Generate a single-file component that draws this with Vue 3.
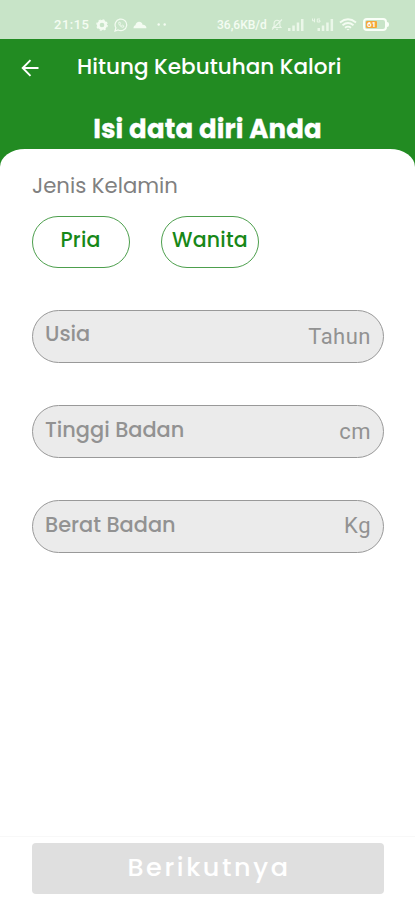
<script setup>
import { ref } from 'vue'

const genders = [
  { id: 'pria', label: 'Pria' },
  { id: 'wanita', label: 'Wanita' },
]
const fields = [
  { id: 'usia', label: 'Usia', unit: 'Tahun' },
  { id: 'tinggi', label: 'Tinggi Badan', unit: 'cm' },
  { id: 'berat', label: 'Berat Badan', unit: 'Kg' },
]
const selected = ref(null)
</script>

<template>
  <div class="screen">
    <div class="status">
      <span class="time">21:15</span>
      <svg class="gear" width="12" height="12" viewBox="0 0 12 12">
        <circle cx="6" cy="6" r="3.7" fill="none" stroke="currentColor" stroke-width="2.7" />
        <circle cx="6" cy="6" r="5.2" fill="none" stroke="currentColor" stroke-width="1.2" stroke-dasharray="2.1 1.98" />
      </svg>
      <svg class="chat" width="14" height="14" viewBox="0 0 14 14" fill="none" stroke="currentColor">
        <path d="M1 13l.9-3.2A5.8 5.8 0 1 1 4.2 12z" stroke-width="1.2" />
        <path d="M4.8 4.3c-.6 2.3 2.2 5.2 4.6 4.9l.5-1.2-1.5-.8-.8.7C6.7 7.5 6.3 7 6 6.3l.6-.7-.7-1.5z" stroke-width=".8" />
      </svg>
      <svg class="cloud" width="14" height="9" viewBox="0 0 13 8">
        <path d="M.5 7.500C.4 5.700 1.300 4.900 2.300 4.600 2.600 1.700 6 .2 8 2.400c.7.700.8 1.500.9 1.900 1.700-.3 3.600.8 3.600 3.200z" fill="currentColor" />
      </svg>
      <svg class="more" width="10" height="3" viewBox="0 0 10 3" fill="currentColor">
        <circle cx="1.700" cy="1.500" r="1.200" /><circle cx="7.700" cy="1.500" r="1.200" />
      </svg>
      <span class="speed">36,6KB/d</span>
      <svg class="mute" width="12" height="13" viewBox="0 0 12 13" fill="none" stroke="currentColor">
        <path d="M2 9.500h8L8.900 8V5.200a2.900 2.900 0 0 0-5.800 0V8zM5 11.300h2M1 11.500L11 1.500" stroke-width="1.100" />
      </svg>
      <svg class="signal" width="16" height="12" viewBox="0 0 16 12" fill="currentColor">
        <path d="M0 9h2.500v3H0zM4.300 6.500h2.500V12H4.300zM8.700 3.500h2.500V12H8.700zM13 0h2.500v12H13z" />
      </svg>
      <svg class="signal-data" width="22" height="13" viewBox="0 0 22 13" fill="currentColor">
        <path d="M5.500 10H8v3H5.500zM9.800 7.500h2.500V13H9.800zM14.200 4.500h2.500V13h-2.500zM18.600 1h2.500v12h-2.500z" />
        <path d="M.5.500v2.300h2V.5M2.500 2.300v2M8 1H5.300v3H8V2.600H6.700" fill="none" stroke="currentColor" stroke-width="1" />
      </svg>
      <svg class="wifi" width="18" height="13" viewBox="0 0 18 13" fill="none" stroke="currentColor" stroke-width="1.800">
        <path d="M1 4.500q8-6.500 16 0M3.500 7.200q5.500-4.500 11 0M6 9.800q3-2.400 6 0" />
        <path d="M7.500 11h3L9 12.500z" fill="currentColor" stroke="none" />
      </svg>
      <span class="battery"><span class="charge">61</span></span>
    </div>

    <header class="bar">
      <svg class="back" width="18" height="18" viewBox="0 0 18 18" fill="none" stroke="#fff" stroke-width="1.900">
        <path d="M17.500 9H1.800M9.500 1.200L1.700 9l7.800 7.800" />
      </svg>
      <h1 class="title">Hitung Kebutuhan Kalori</h1>
    </header>
    <h2 class="heading">Isi data diri Anda</h2>

    <main class="card">
      <p class="caption">Jenis Kelamin</p>
      <div class="genders">
        <button
          v-for="g in genders"
          :key="g.id"
          type="button"
          class="gender"
          :class="g.id"
          :aria-pressed="selected === g.id"
          @click="selected = g.id"
        >{{ g.label }}</button>
      </div>
      <div class="fields">
        <label v-for="f in fields" :key="f.id" class="field" :class="f.id">
          <span class="label">{{ f.label }}</span>
          <span class="unit">{{ f.unit }}</span>
        </label>
      </div>
    </main>

    <footer class="footer">
      <button type="button" class="next">Berikutnya</button>
    </footer>
  </div>
</template>

<style>
body {
  margin: 0;
}
</style>

<style scoped>
.screen {
  box-sizing: border-box;
  width: 415px;
  height: 900px;
  display: flex;
  flex-direction: column;
  overflow: hidden;
  background: #228b22;
  font-family: Poppins, Inter, sans-serif;
}
.status {
  flex: none;
  box-sizing: border-box;
  height: 39px;
  padding: 10px 20px 0 54px;
  display: flex;
  align-items: center;
  background: #c8e4c8;
  color: #f4fcf2;
}
.status svg {
  flex: none;
}
.time {
  width: 42px;
  font: 500 13px/16px Roboto, sans-serif;
  letter-spacing: 0.5px;
}
.chat {
  margin-left: 6px;
}
.cloud {
  margin-left: 5px;
}
.more {
  margin-left: 10px;
}
.speed {
  width: 52px;
  margin-left: 50px;
  font: 500 12px/16px Roboto, sans-serif;
  white-space: nowrap;
}
.mute {
  margin-left: 2px;
  opacity: 0.8;
}
.signal {
  margin-left: 5px;
  opacity: 0.8;
}
.signal-data {
  margin-left: 8px;
  opacity: 0.8;
}
.wifi {
  margin-left: 5px;
}
.battery {
  box-sizing: border-box;
  position: relative;
  flex: none;
  width: 24px;
  height: 13px;
  margin-left: 6px;
  padding: 1px;
  border: 2px solid #fafff8;
  border-radius: 4px;
  display: flex;
}
.battery::after {
  content: "";
  position: absolute;
  right: -4px;
  top: 2px;
  width: 2px;
  height: 5px;
  border-radius: 0 2px 2px 0;
  background: #fafff8;
}
.charge {
  width: 11px;
  border-radius: 1px;
  background: #f5a839;
  color: #fff;
  font: 700 8px/8px Roboto, sans-serif;
  text-align: center;
}
.bar {
  flex: none;
  height: 54px;
  padding-left: 21px;
  display: flex;
  align-items: center;
}
.back {
  margin-top: 4px;
}
.title {
  margin: 2px 0 0 38px;
  color: #fff;
  font-size: 21.5px;
  line-height: 54px;
  font-weight: 500;
  letter-spacing: 0.03px;
  white-space: nowrap;
}
.heading {
  flex: none;
  margin: 0;
  height: 56px;
  line-height: 73px;
  color: #fff;
  font-size: 26px;
  font-weight: 700;
  letter-spacing: 0.15px;
  text-align: center;
  white-space: nowrap;
  -webkit-text-stroke: 0.3px #fff;
}
.card {
  flex: 1;
  box-sizing: border-box;
  padding: 21px 31px 0 32px;
  border-radius: 25px 25px 0 0 / 18px 18px 0 0;
  background: #fff;
}
.caption {
  margin: 0;
  color: #808080;
  font-size: 21.2px;
  line-height: 32px;
}
.genders {
  display: flex;
  gap: 31px;
  margin-top: 14px;
}
.gender {
  box-sizing: border-box;
  width: 98px;
  height: 52px;
  padding: 0 0 5px;
  border: 1px solid #4d9f4d;
  border-radius: 26px;
  background: #fff;
  color: #178817;
  font-family: inherit;
  font-size: 20.5px;
  font-weight: 500;
  letter-spacing: 0.2px;
}
.gender.pria {
  padding-right: 1px;
}
.fields {
  display: flex;
  flex-direction: column;
  gap: 42px;
  margin-top: 42px;
}
.field {
  box-sizing: border-box;
  height: 53px;
  padding: 0 12px;
  display: flex;
  justify-content: space-between;
  align-items: center;
  border: 1px solid #999;
  border-radius: 27px;
  background: #ebebeb;
  color: #929292;
}
.label {
  padding-bottom: 4px;
  font-size: 20.9px;
  line-height: 30px;
  font-weight: 500;
}
.usia .label {
  padding-bottom: 6px;
}
.unit {
  font: 400 22px/30px Roboto, sans-serif;
  letter-spacing: 0.5px;
}
.berat .unit {
  padding-bottom: 2px;
}
.footer {
  flex: none;
  box-sizing: border-box;
  height: 64px;
  padding: 6px 31px 0 32px;
  border-top: 1px solid #f8f8f8;
  background: #fff;
}
.next {
  display: block;
  width: 100%;
  height: 51px;
  padding: 0 0 3px 2px;
  border: 0;
  border-radius: 4px;
  background: #dfdfdf;
  color: #fff;
  font-family: inherit;
  font-size: 25.5px;
  font-weight: 500;
  letter-spacing: 2.6px;
}
</style>
